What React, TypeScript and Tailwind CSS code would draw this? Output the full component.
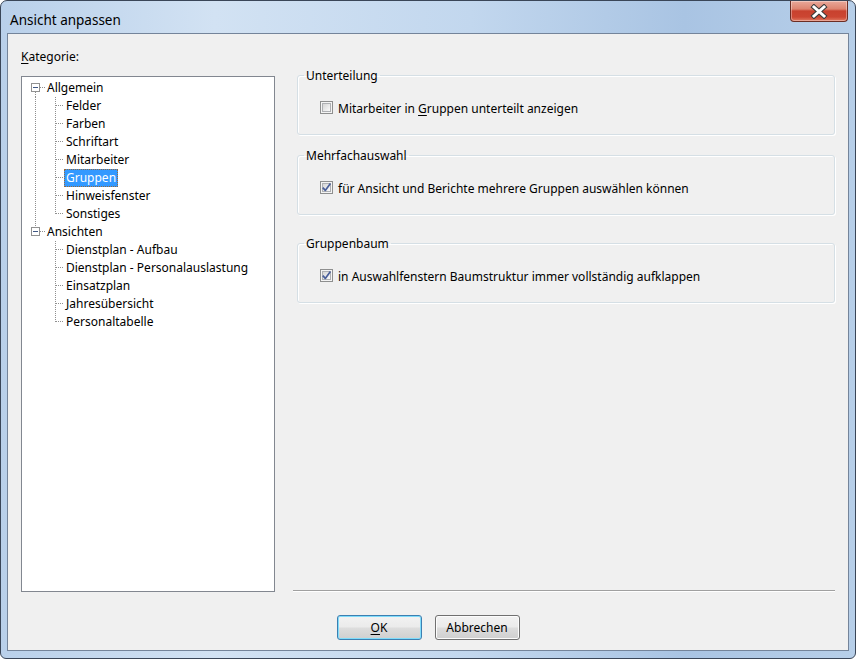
import React from "react";

type Row = {
  label: string;
  level: 0 | 1;
  first?: boolean;
  last?: boolean;
  parentNext?: boolean;
  selected?: boolean;
};

const rows: Row[] = [
  { label: "Allgemein", level: 0, first: true },
  { label: "Felder", level: 1, parentNext: true },
  { label: "Farben", level: 1, parentNext: true },
  { label: "Schriftart", level: 1, parentNext: true },
  { label: "Mitarbeiter", level: 1, parentNext: true },
  { label: "Gruppen", level: 1, parentNext: true, selected: true },
  { label: "Hinweisfenster", level: 1, parentNext: true },
  { label: "Sonstiges", level: 1, parentNext: true, last: true },
  { label: "Ansichten", level: 0, last: true },
  { label: "Dienstplan - Aufbau", level: 1 },
  { label: "Dienstplan - Personalauslastung", level: 1 },
  { label: "Einsatzplan", level: 1 },
  { label: "Jahresübersicht", level: 1 },
  { label: "Personaltabelle", level: 1, last: true },
];

const LINE = "#8f8f8f";

function TreeLines({ row }: { row: Row }) {
  if (row.level === 0) {
    return (
      <svg width="23" height="18" className="shrink-0">
        {!row.first && <line x1="13.5" y1="0" x2="13.5" y2="4" stroke={LINE} strokeDasharray="1 1" />}
        {!row.last && <line x1="13.5" y1="13" x2="13.5" y2="18" stroke={LINE} strokeDasharray="1 1" />}
        <rect x="9.5" y="4.5" width="8" height="8" fill="#ffffff" stroke="#919191" />
        <rect x="11" y="8" width="5" height="1" fill="#3f5784" />
        <line x1="18" y1="8.5" x2="23" y2="8.5" stroke={LINE} strokeDasharray="1 1" />
      </svg>
    );
  }
  return (
    <svg width="42" height="18" className="shrink-0">
      {row.parentNext && <line x1="13.5" y1="0" x2="13.5" y2="18" stroke={LINE} strokeDasharray="1 1" />}
      <line x1="33.5" y1="0" x2="33.5" y2={row.last ? 9 : 18} stroke={LINE} strokeDasharray="1 1" />
      <line x1="34" y1="8.5" x2="42" y2="8.5" stroke={LINE} strokeDasharray="1 1" />
    </svg>
  );
}

function Checkbox({ checked }: { checked: boolean }) {
  return (
    <div className="mt-[1px] w-[13px] h-[13px] shrink-0 border border-[#8e8f8f] bg-[#f4f4f4] p-[1px]">
      <div className="w-full h-full border border-[#aeb0b3] bg-[linear-gradient(135deg,#d6d6d6_0%,#ececec_60%,#fbfbfb_100%)] flex items-center justify-center">
        {checked && (
          <svg width="9" height="9" viewBox="0 0 9 9" className="overflow-visible">
            <path d="M0.8 4.6 L3.3 7.4 L8.4 0.6" fill="none" stroke="#4a5f9a" strokeWidth="1.7" strokeLinejoin="round" />
          </svg>
        )}
      </div>
    </div>
  );
}

function Group({ title, checked, children, className }: { title: string; checked: boolean; children: React.ReactNode; className?: string }) {
  return (
    <fieldset className={"ml-[4px] h-[69px] border border-[#d5dfe5] rounded-[3px] shadow-[inset_1px_1px_0_#ffffff,1px_1px_0_#ffffff] " + (className ?? "")}>
      <legend className="ml-[6px] px-[2px] pt-[2px] leading-[16px]">{title}</legend>
      <div className="mt-[16px] pl-[22px] h-[18px] flex items-start gap-[5px]">
        <Checkbox checked={checked} />
        <span className="leading-[18px] whitespace-nowrap">{children}</span>
      </div>
    </fieldset>
  );
}

function Button({ children, primary }: { children: React.ReactNode; primary?: boolean }) {
  return (
    <div
      className={
        "w-[85px] h-[25px] pt-[1px] rounded-[3px] border flex items-center justify-center leading-[16px] bg-[linear-gradient(#f2f2f2_0%,#ebebeb_48%,#dddddd_52%,#cfcfcf_100%)] " +
        (primary
          ? "border-[#3c7fb1] shadow-[inset_0_0_0_1px_#7fdcfb]"
          : "border-[#707070] shadow-[inset_0_0_0_1px_#fcfcfc]")
      }
    >
      {children}
    </div>
  );
}

function CloseButton() {
  return (
    <div className="mr-[1px] w-[58px] h-[21px] rounded-b-[4px] border border-t-0 border-[#6b2d24] bg-[linear-gradient(#e9a89a_0%,#de8470_40%,#c8412e_50%,#cc4632_80%,#e07a62_100%)] shadow-[inset_0_0_0_1px_rgba(255,255,255,0.35)] flex items-center justify-center">
      <svg width="18" height="15" viewBox="0 0 18 15">
        <path d="M4 3 L14 12 M14 3 L4 12" stroke="#3a3a3a" strokeWidth="5" strokeLinecap="square" />
        <path d="M4 3 L14 12 M14 3 L4 12" stroke="#ffffff" strokeWidth="3" strokeLinecap="square" />
      </svg>
    </div>
  );
}

export default function App() {
  return (
    <div className="w-[856px] h-[659px] bg-white font-['Noto_Sans',sans-serif] text-[12px] text-black">
      <div className="w-full h-full flex flex-col rounded-t-[7px] rounded-b-[6px] border border-[#3a4658] bg-[linear-gradient(90deg,#b9d0ea_0%,#d2e2f3_25%,#c2d7ee_55%,#a9c4e3_80%,#b7cfe9_100%)] px-[6px] pb-[7px]">
        <div className="h-[32px] flex items-start justify-between">
          <div className="pl-[3px] pt-[9px] text-[13.5px] leading-[20px] whitespace-nowrap">Ansicht anpassen</div>
          <CloseButton />
        </div>
        <div className="flex-1 border border-[#74849a] bg-[#f0f0f0] flex flex-col">
          <div className="flex pl-[13px] pt-[14px]">
            <div className="w-[254px] flex flex-col">
              <div className="h-[16px] leading-[18px]">
                <span className="underline underline-offset-2">K</span>ategorie:
              </div>
              <div className="mt-[12px] h-[516px] border border-[#828790] bg-white pt-[2px]">
                {rows.map((r) => (
                  <div key={r.label} className="h-[18px] flex items-stretch">
                    <TreeLines row={r} />
                    <span
                      className={
                        "border px-[1px] leading-[16px] whitespace-nowrap " +
                        (r.selected
                          ? "bg-[#3399ff] text-white border-dotted border-[#9a6a3a]"
                          : "border-transparent")
                      }
                    >
                      {r.label}
                    </span>
                  </div>
                ))}
              </div>
            </div>
            <div className="ml-[18px] w-[542px] flex flex-col pt-[18px]">
              <Group title="Unterteilung" checked={false}>
                Mitarbeiter in <span className="underline underline-offset-2">G</span>ruppen unterteilt anzeigen
              </Group>
              <Group title="Mehrfachauswahl" checked={true} className="mt-[11px]">
                für Ansicht und Berichte mehrere Gruppen auswählen können
              </Group>
              <Group title="Gruppenbaum" checked={true} className="mt-[19px]">
                in Auswahlfenstern Baumstruktur immer vollständig aufklappen
              </Group>
              <div className="mt-auto h-[2px] border-t border-[#a0a0a0] border-b border-b-white" />
            </div>
          </div>
          <div className="mt-[23px] flex justify-center gap-[13px]">
            <Button primary>
              <span className="underline underline-offset-2">O</span>K
            </Button>
            <Button>Abbrechen</Button>
          </div>
        </div>
      </div>
    </div>
  );
}
